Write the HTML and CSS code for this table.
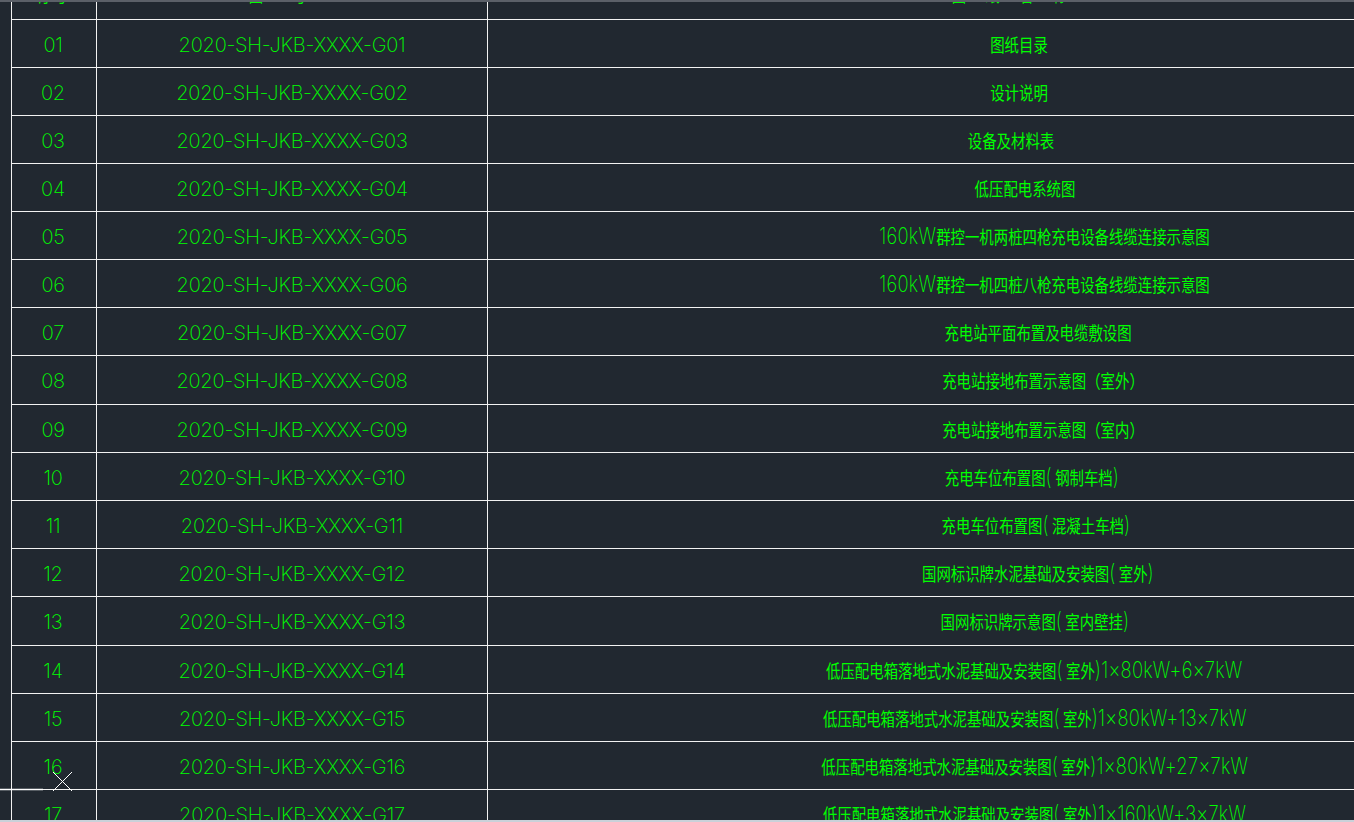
FILE: index.html
```html
<!DOCTYPE html>
<html lang="zh-CN">
<head>
<meta charset="utf-8">
<title>图纸目录</title>
<link rel="stylesheet" href="styles.css">
</head>
<body>
<div class="frame-top"></div>
<div class="sheet">
  <div class="row head">
    <div class="cell c1"><span class="cn">序号</span></div>
    <div class="cell c2"><span class="cn wide">图号</span></div>
    <div class="cell c3"><span class="cn wider">图纸名称</span></div>
  </div>
  <div class="row"><div class="cell c1">01</div><div class="cell c2">2020-SH-JKB-XXXX-G01</div><div class="cell c3"><span class="name">图纸目录</span></div></div>
  <div class="row"><div class="cell c1">02</div><div class="cell c2">2020-SH-JKB-XXXX-G02</div><div class="cell c3"><span class="name">设计说明</span></div></div>
  <div class="row"><div class="cell c1">03</div><div class="cell c2">2020-SH-JKB-XXXX-G03</div><div class="cell c3 nudge-l8"><span class="name">设备及材料表</span></div></div>
  <div class="row"><div class="cell c1">04</div><div class="cell c2">2020-SH-JKB-XXXX-G04</div><div class="cell c3 nudge-r6"><span class="name">低压配电系统图</span></div></div>
  <div class="row"><div class="cell c1">05</div><div class="cell c2">2020-SH-JKB-XXXX-G05</div><div class="cell c3 nudge-r26"><span class="name"><span class="en">160kW</span>群控一机两桩四枪充电设备线缆连接示意图</span></div></div>
  <div class="row"><div class="cell c1">06</div><div class="cell c2">2020-SH-JKB-XXXX-G06</div><div class="cell c3 nudge-r26"><span class="name"><span class="en">160kW</span>群控一机四桩八枪充电设备线缆连接示意图</span></div></div>
  <div class="row"><div class="cell c1">07</div><div class="cell c2">2020-SH-JKB-XXXX-G07</div><div class="cell c3 nudge-r19"><span class="name">充电站平面布置及电缆敷设图</span></div></div>
  <div class="row"><div class="cell c1">08</div><div class="cell c2">2020-SH-JKB-XXXX-G08</div><div class="cell c3 nudge-r24"><span class="name">充电站接地布置示意图（室外）</span></div></div>
  <div class="row"><div class="cell c1">09</div><div class="cell c2">2020-SH-JKB-XXXX-G09</div><div class="cell c3 nudge-r24"><span class="name">充电站接地布置示意图（室内）</span></div></div>
  <div class="row"><div class="cell c1">10</div><div class="cell c2">2020-SH-JKB-XXXX-G10</div><div class="cell c3 nudge-r13"><span class="name">充电车位布置图<span class="en">(</span> 钢制车档<span class="en">)</span></span></div></div>
  <div class="row"><div class="cell c1">11</div><div class="cell c2">2020-SH-JKB-XXXX-G11</div><div class="cell c3 nudge-r17"><span class="name">充电车位布置图<span class="en">(</span> 混凝土车档<span class="en">)</span></span></div></div>
  <div class="row"><div class="cell c1">12</div><div class="cell c2">2020-SH-JKB-XXXX-G12</div><div class="cell c3 nudge-r19"><span class="name">国网标识牌水泥基础及安装图<span class="en">(</span> 室外<span class="en">)</span></span></div></div>
  <div class="row"><div class="cell c1">13</div><div class="cell c2">2020-SH-JKB-XXXX-G13</div><div class="cell c3 nudge-r16"><span class="name">国网标识牌示意图<span class="en">(</span> 室内壁挂<span class="en">)</span></span></div></div>
  <div class="row"><div class="cell c1">14</div><div class="cell c2">2020-SH-JKB-XXXX-G14</div><div class="cell c3 nudge-r16"><span class="name">低压配电箱落地式水泥基础及安装图<span class="en">(</span> 室外<span class="en">)1×80kW+6×7kW</span></span></div></div>
  <div class="row"><div class="cell c1">15</div><div class="cell c2">2020-SH-JKB-XXXX-G15</div><div class="cell c3 nudge-r16"><span class="name">低压配电箱落地式水泥基础及安装图<span class="en">(</span> 室外<span class="en">)1×80kW+13×7kW</span></span></div></div>
  <div class="row"><div class="cell c1">16</div><div class="cell c2">2020-SH-JKB-XXXX-G16</div><div class="cell c3 nudge-r16"><span class="name">低压配电箱落地式水泥基础及安装图<span class="en">(</span> 室外<span class="en">)1×80kW+27×7kW</span></span></div></div>
  <div class="row"><div class="cell c1">17</div><div class="cell c2">2020-SH-JKB-XXXX-G17</div><div class="cell c3 nudge-r16"><span class="name">低压配电箱落地式水泥基础及安装图<span class="en">(</span> 室外<span class="en">)1×160kW+3×7kW</span></span></div></div>
</div>
<svg class="ucs" width="80" height="30" viewBox="0 0 80 30">
  <line x1="0" y1="19.5" x2="43" y2="19.5" stroke="#ffffff" stroke-width="1.5"/>
  <line x1="53" y1="2" x2="72" y2="21" stroke="#ffffff" stroke-width="1"/>
  <line x1="72" y1="2" x2="53" y2="21" stroke="#ffffff" stroke-width="1"/>
</svg>
<div class="frame-bottom"></div>
</body>
</html>
```

FILE: styles.css
```css
html, body {
  margin: 0;
  padding: 0;
  height: 100%;
}

body {
  background: #212830;
  overflow: hidden;
  position: relative;
  color: #00ff00;
  font-family: "Inter", "Liberation Sans", "Noto Sans CJK SC", sans-serif;
  font-weight: 250;
}

.frame-top {
  position: fixed;
  left: 0;
  top: 0;
  width: 100%;
  height: 2px;
  background: #5b6068;
  z-index: 2;
}

.frame-bottom {
  position: fixed;
  left: 0;
  bottom: 0;
  width: 100%;
  height: 2px;
  background: #c9d1d9;
  z-index: 2;
}

.sheet {
  padding-left: 11px;
  margin-top: -28px;
  display: flex;
  flex-direction: column;
  width: max-content;
}

.row {
  display: grid;
  grid-template-columns: 85px 391px 1062px;
  height: 48px;
}

.row:nth-child(9),
.row:nth-child(14) {
  height: 49px;
}

.cell {
  border-left: 1px solid #f2f2f2;
  border-bottom: 1px solid #f2f2f2;
  display: flex;
  align-items: center;
  justify-content: center;
  font-size: 20px;
  letter-spacing: -0.25px;
  white-space: nowrap;
  padding-top: 2px;
  box-sizing: border-box;
}

.c1 {
  padding-right: 2px;
}

.c3 {
  padding-top: 0;
}

.nudge-l8 { padding-right: 16px; }
.nudge-r6 { padding-left: 12px; }
.nudge-r13 { padding-left: 26px; }
.nudge-r16 { padding-left: 32px; }
.nudge-r17 { padding-left: 34px; }
.nudge-r19 { padding-left: 38px; }
.nudge-r24 { padding-left: 48px; }
.nudge-r26 { padding-left: 52px; }

.name {
  display: inline-block;
  font-family: "Noto Sans CJK SC", sans-serif;
  font-weight: 400;
  font-size: 18px;
  letter-spacing: 0;
  transform: scaleX(0.8);
}

.name .en {
  font-family: "Inter", "Liberation Sans", sans-serif;
  font-weight: 250;
  font-size: 23px;
  letter-spacing: 0.3px;
}

.cn {
  font-family: "Noto Sans CJK SC", sans-serif;
  font-weight: 400;
  font-size: 18px;
  letter-spacing: 0;
  transform: scaleX(0.8);
}

.wide {
  letter-spacing: 36px;
}

.wider {
  letter-spacing: 24px;
}

.head .cell {
  align-items: flex-end;
  padding-bottom: 12px;
}

.ucs {
  position: absolute;
  left: 0;
  top: 770px;
  z-index: 1;
}
```
